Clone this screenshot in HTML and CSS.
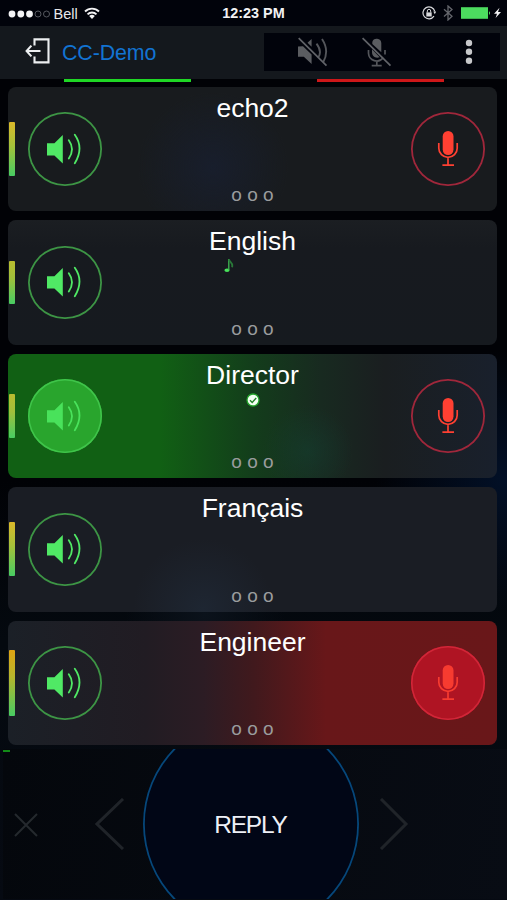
FILE: index.html
```html
<!DOCTYPE html>
<html lang="en">
<head>
<meta charset="utf-8">
<title>CC-Demo</title>
<link rel="stylesheet" href="styles.css">
</head>
<body>
<svg width="0" height="0" class="defs">
  <symbol id="speaker" viewBox="0 0 36 32">
    <path d="M1 10.3h7.4L16.8 2v28.6l-8.4-8.1H1z" fill="currentColor"/>
    <path d="M22.8 7.3q6.4 8.8 0 18.2M28.8 1.8q9.4 13.2 0 28.4" fill="none" stroke="currentColor" stroke-width="1.8" stroke-linecap="round"/>
  </symbol>
  <symbol id="mic" viewBox="0 0 22 37">
    <rect x="5.7" y="1" width="10.8" height="24" rx="5.4" fill="currentColor"/>
    <path d="M1.8 13v5.2a9.2 9.2 0 0 0 18.4 0V13M11 27.4v7.8M5.4 35.2h11.6" fill="none" stroke="currentColor" stroke-width="1.7"/>
  </symbol>
</svg>
<div class="screen">
  <header class="status">
    <div class="carrier">
      <svg class="signal" width="42" height="10" viewBox="0 0 42 10"><g fill="#f4f4f6"><circle cx="4" cy="5" r="3.4"/><circle cx="12.8" cy="5" r="3.4"/><circle cx="21.5" cy="5" r="3.4"/></g><g fill="none" stroke="#55585f"><circle cx="30" cy="5" r="3"/><circle cx="38.5" cy="5" r="3"/></g></svg>
      <span class="bell">Bell</span>
      <svg class="wifi" width="16" height="13" viewBox="0 0 16 13"><g fill="none" stroke="#f2f2f4" stroke-width="1.9"><path d="M1 4.5a10 10 0 0 1 14 0M3.5 7.4a6.4 6.4 0 0 1 9 0"/></g><path d="M5.2 9a4 4 0 0 1 5.6 0L8 12z" fill="#f2f2f4"/></svg>
    </div>
    <span class="time">12:23 PM</span>
    <div class="indicators">
      <svg width="14" height="14" viewBox="0 0 14 14"><path d="M12.8 5.4A6 6 0 1 0 12 10.2" fill="none" stroke="#d8d9dc" stroke-width="1.2"/><path d="M11.3 5.6h3l-1.5 2.6z" fill="#d8d9dc"/><path d="M4.3 6.4h5.4v4.1H4.3z" fill="#d8d9dc"/><path d="M5.3 6.5V5a1.7 1.7 0 0 1 3.4 0v1.5" fill="none" stroke="#d8d9dc"/></svg>
      <svg width="10" height="16" viewBox="0 0 10 16"><path d="M1 4.3l8 7L5 15V1l4 3.6-8 7" fill="none" stroke="#65676d" stroke-width="1.3"/></svg>
      <svg width="40" height="14" viewBox="0 0 40 14"><path d="M0 1.2h27v11.6H0z" fill="#4cdc5f"/><path d="M28 5.2a2.2 2.2 0 0 1 0 3.8z" fill="#4cdc5f"/><path d="M38.5 1.8L33 7.8h3L34.6 12 40 6h-3z" fill="#f2f2f4"/></svg>
    </div>
  </header>

  <nav class="bar">
    <svg class="exit" width="26" height="26" viewBox="0 0 26 26" fill="none" stroke="#eceef0" stroke-width="2.1"><path d="M10.5 7.4V1.4h14v23h-14v-6"/><path d="M16.5 13H2.6M7.4 7.6L2.6 13l4.8 5.4"/></svg>
    <span class="name">CC-Demo</span>
    <div class="tools">
      <svg class="mute" width="32" height="30" viewBox="0 0 32 30"><g fill="#5b5d61"><path d="M2 9.6l5-.4 8.6 8.4V27l-7.8-7.3H2zM11.5 5.8L15.6 2v7.8z"/></g><g fill="none" stroke="#54565b" stroke-width="1.9"><path d="M20.5 6.7q6 7.8 1.6 14M26 2q7.6 11.6 1.3 23"/><path d="M2.7 1.2l27.8 27.4" stroke="#616368" stroke-width="1.7"/></g></svg>
      <svg class="micoff" width="32" height="30" viewBox="0 0 32 30"><path d="M11.3 5a4.6 4.6 0 0 1 9 1v9.2L11.3 7zM11 12.3l7.7 8C14 21.8 11 19 11 15z" fill="#5b5d61"/><g fill="none" stroke="#54565b" stroke-width="1.7"><path d="M7.5 13v3.3a8.2 8.2 0 0 0 14.7 4.5M24 13v4.5M15.8 24v5M10.7 28.7h10"/><path d="M1.6 1.2L29.5 28.6" stroke="#616368"/></g></svg>
      <svg class="more" width="8" height="26" viewBox="0 0 8 26" fill="#c7c8cb"><circle cx="4" cy="4" r="3.2"/><circle cx="4" cy="12.7" r="3.2"/><circle cx="4" cy="21.7" r="3.2"/></svg>
    </div>
    <i class="level level-in"></i><i class="level level-out"></i>
  </nav>

  <main class="channels">
    <section class="card glow-top">
      <i class="meter mid"></i>
      <div class="round listen"><svg class="spk"><use href="#speaker"/></svg></div>
      <div class="center"><h2>echo2</h2><span class="dots">o o o</span></div>
      <div class="round talk"><svg class="mic"><use href="#mic"/></svg></div>
    </section>
    <section class="card">
      <i class="meter low"></i>
      <div class="round listen"><svg class="spk"><use href="#speaker"/></svg></div>
      <div class="center"><h2>English</h2>
        <svg class="note" width="10" height="15" viewBox="0 0 10 15"><ellipse cx="3" cy="12.2" rx="2.6" ry="1.8" fill="#48e35b"/><path d="M4.8 12V1" stroke="#3fb953" stroke-width="1.3"/><path d="M5 1.4c.4 3 4.6 3.5 3 7.8" fill="none" stroke="#297838" stroke-width="1.8"/></svg>
        <span class="dots">o o o</span></div>
      <div class="round empty"></div>
    </section>
    <section class="card listening">
      <i class="meter low"></i>
      <div class="round listen on"><svg class="spk"><use href="#speaker"/></svg></div>
      <div class="center"><h2>Director</h2>
        <svg class="check" width="14" height="14" viewBox="0 0 14 14"><circle cx="7" cy="7" r="6" fill="#f3fff2" stroke="#24a52c" stroke-width="1.3"/><path d="M4 7.2l2.2 2.2L10.2 5" fill="none" stroke="#218329" stroke-width="1.4"/></svg>
        <span class="dots">o o o</span></div>
      <div class="round talk"><svg class="mic"><use href="#mic"/></svg></div>
    </section>
    <section class="card glow-low">
      <i class="meter mid"></i>
      <div class="round listen"><svg class="spk"><use href="#speaker"/></svg></div>
      <div class="center"><h2>Français</h2><span class="dots">o o o</span></div>
      <div class="round empty"></div>
    </section>
    <section class="card talking">
      <i class="meter high"></i>
      <div class="round listen"><svg class="spk"><use href="#speaker"/></svg></div>
      <div class="center"><h2>Engineer</h2><span class="dots">o o o</span></div>
      <div class="round talk on"><svg class="mic"><use href="#mic"/></svg></div>
    </section>
  </main>

  <footer class="reply-bar">
    <i class="tick"></i>
    <svg class="close" width="24" height="24" viewBox="0 0 24 24"><path d="M1 1l22 22M23 1L1 23" stroke="#25292e" stroke-width="2"/></svg>
    <svg class="prev" width="30" height="52" viewBox="0 0 30 52"><path d="M28 1L2 26l26 25" fill="none" stroke="#202429" stroke-width="3"/></svg>
    <div class="reply"><span>REPLY</span></div>
    <svg class="next" width="30" height="52" viewBox="0 0 30 52"><path d="M2 1l25 25L2 51" fill="none" stroke="#202429" stroke-width="3"/></svg>
  </footer>
</div>
</body>
</html>
```
FILE: styles.css
```css
* { box-sizing: border-box; }
body { margin: 0; background: #000; font-family: "Liberation Sans", Arial, sans-serif; color: #fff; }
svg { display: block; flex: none; }
.defs { position: absolute; }
.screen {
  width: 507px; height: 900px; overflow: hidden; display: flex; flex-direction: column;
  background:
    radial-gradient(circle at 505px 480px, #021027 0, rgba(2,14,35,0) 130px),
    radial-gradient(circle at 205px 615px, #0b121b 0, rgba(8,14,22,0) 80px),
    linear-gradient(#010206 0, #010206 480px, #04090f 640px, #060a12 900px);
}
.status { height: 26px; flex: none; display: grid; grid-template-columns: 1fr auto 1fr; align-items: center; background: #01030b; }
.carrier { display: flex; align-items: center; padding: 0 0 0 8px; }
.bell { font-size: 14.5px; margin-left: 3.5px; line-height: 26px; color: #e8e8ea; }
.wifi { margin-left: 6px; }
.time { font-size: 14.4px; font-weight: bold; line-height: 27px; color: #f2f2f4; }
.indicators { display: flex; align-items: center; justify-content: flex-end; gap: 7px; padding: 0 6px 2px 0; }
.indicators svg:last-child { margin-left: 1px; }

.bar { height: 53px; flex: none; display: flex; align-items: center; background: #14181d; position: relative; }
.exit { margin: -3px 0 0 24px; }
.name { margin: 1px 0 0 12px; font-size: 21.4px; letter-spacing: -.1px; color: #1273d2; line-height: 26px; }
.tools { margin: 0 7px 2px auto; width: 236px; height: 38px; background: #01030b; display: flex; align-items: center; }
.mute { margin-left: 32px; }
.micoff { margin-left: 33px; }
.more { margin-left: 71.5px; }
.level { position: absolute; top: 52.5px; height: 3px; width: 127px; }
.level-in { left: 64px; background: #1fd725; }
.level-out { left: 317px; background: #ce1719; }

.channels { padding: 7.5px 10px 0 8px; display: grid; gap: 9px; flex: none; }
.card { height: 124.5px; border-radius: 8px; background: linear-gradient(#1b1e22 0, #171a1f 22%, #161a1f); display: grid; grid-template-columns: 20px 73.5px 1fr 73.5px 12.5px; align-items: center; }
.glow-top { background: radial-gradient(circle at 205px 80px, #181e2c 0, rgba(23,28,40,0) 75px), #181b1e; }
.glow-low { background: radial-gradient(circle at 195px 122px, #1e2632 0, rgba(29,36,48,0) 70px), #1a1d24; }
.listening { background: radial-gradient(circle at 300px 97px, rgba(20,66,52,.45) 0, rgba(20,66,52,0) 45px), linear-gradient(90deg, #116014 0, #116014 31%, #133d1b 50%, #182a20 64%, #1a1e20 77%, #19202c); }
.talking { background: linear-gradient(90deg, #1b2027 0, #211c23 28%, #2c1c24 40%, #40191d 50%, #681719 65%, #691719); }
.meter { width: 5.5px; margin-left: 1px; border-radius: 1px; background: linear-gradient(#b9bd2f, #a0bf3b 40%, #48cc63); }
.mid { height: 54px; background: linear-gradient(#dbb92a, #a4c13a 45%, #48cc63); }
.low { height: 43.5px; }
.high { height: 65.5px; background: linear-gradient(#dfa513, #b7b52c 40%, #48cc63); }
.round { width: 73.5px; height: 73.5px; border-radius: 50%; display: flex; align-items: center; justify-content: center; }
.listen { box-shadow: inset 0 0 0 1.8px #3d9545; color: #50e965; }
.listen.on { background: #29a52d; box-shadow: inset 0 0 0 1.6px #3fc44a; color: #4eeb62; }
.talk { box-shadow: inset 0 0 0 1.8px #a0273b; color: #ff4032; }
.talk.on { background: #af1423; box-shadow: inset 0 0 0 1.6px #d12638; }
.spk { width: 36px; height: 32px; margin-left: -1px; }
.on .spk { opacity: .88; }
.mic { width: 22px; height: 37px; margin-left: 1px; }
.talk.on .mic { opacity: .9; }
.center { height: 124.5px; position: relative; display: flex; flex-direction: column; align-items: center; justify-content: space-between; padding: 7px 7.5px 5px 0; }
h2 { margin: 0; font-size: 26.5px; line-height: 29px; font-weight: normal; }
.dots { font-size: 19px; line-height: 22px; color: #9a9c9e; }
.note { position: absolute; left: 122.5px; top: 38px; }
.check { position: absolute; left: 144.5px; top: 39px; }

.reply-bar { flex: 1; margin: 4px 0 1px 3px; position: relative; overflow: hidden; display: flex; align-items: center; background: linear-gradient(100deg, #04070c, #080c14); }
.tick { position: absolute; left: 0; top: 1px; width: 7px; height: 2px; background: #128a17; }
.close { margin: 2px 0 0 10.5px; }
.prev { margin: 0 0 0 57px; }
.reply { width: 216px; height: 216px; flex: none; margin: -40px 0 -40px 18px; border-radius: 50%; background: #010616; box-shadow: inset 0 0 0 1.8px #06477a; display: flex; align-items: center; justify-content: center; }
.reply span { font-size: 24.5px; letter-spacing: -1.2px; padding-top: 1px; color: #eef0f6; }
.next { margin: 0 0 0 20px; }
```
